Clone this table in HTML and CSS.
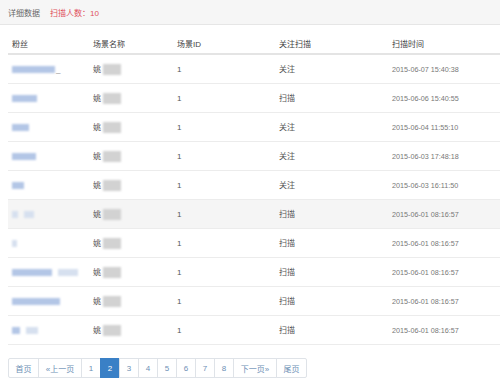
FILE: index.html
```html
<!DOCTYPE html>
<html lang="zh">
<head>
<meta charset="utf-8">
<link rel="stylesheet" href="styles.css">
</head>
<body>
<div class="topbar">
  <span class="title">详细数据</span>
  <span class="count">扫描人数：10</span>
</div>
<table class="data">
  <colgroup>
    <col class="c1"><col class="c2"><col class="c3"><col class="c4"><col class="c5">
  </colgroup>
  <thead>
    <tr><th>粉丝</th><th>场景名称</th><th>场景ID</th><th>关注扫描</th><th>扫描时间</th></tr>
  </thead>
  <tbody>
    <tr><td><span class="fan" style="width:43px"></span><span class="tail">_</span></td><td>姚<span class="mask"></span></td><td class="num">1</td><td>关注</td><td class="date">2015-06-07 15:40:38</td></tr>
    <tr><td><span class="fan" style="width:25px"></span></td><td>姚<span class="mask"></span></td><td class="num">1</td><td>扫描</td><td class="date">2015-06-06 15:40:55</td></tr>
    <tr><td><span class="fan" style="width:17px"></span></td><td>姚<span class="mask"></span></td><td class="num">1</td><td>关注</td><td class="date">2015-06-04 11:55:10</td></tr>
    <tr><td><span class="fan" style="width:24px"></span></td><td>姚<span class="mask"></span></td><td class="num">1</td><td>关注</td><td class="date">2015-06-03 17:48:18</td></tr>
    <tr><td><span class="fan" style="width:12px"></span></td><td>姚<span class="mask"></span></td><td class="num">1</td><td>关注</td><td class="date">2015-06-03 16:11:50</td></tr>
    <tr class="hover"><td><span class="fan faint" style="width:6px"></span><span class="fan faint gap" style="width:10px"></span></td><td>姚<span class="mask"></span></td><td class="num">1</td><td>扫描</td><td class="date">2015-06-01 08:16:57</td></tr>
    <tr><td><span class="fan faint" style="width:5px"></span></td><td>姚<span class="mask"></span></td><td class="num">1</td><td>扫描</td><td class="date">2015-06-01 08:16:57</td></tr>
    <tr><td><span class="fan" style="width:40px"></span><span class="fan faint gap" style="width:20px"></span></td><td>姚<span class="mask"></span></td><td class="num">1</td><td>扫描</td><td class="date">2015-06-01 08:16:57</td></tr>
    <tr><td><span class="fan" style="width:48px"></span></td><td>姚<span class="mask"></span></td><td class="num">1</td><td>扫描</td><td class="date">2015-06-01 08:16:57</td></tr>
    <tr><td><span class="fan" style="width:8px"></span><span class="fan faint gap" style="width:12px"></span></td><td>姚<span class="mask"></span></td><td class="num">1</td><td>扫描</td><td class="date">2015-06-01 08:16:57</td></tr>
  </tbody>
</table>
<nav class="pager">
  <a class="pg wide2">首页</a>
  <a class="pg wide3">«上一页</a>
  <a class="pg">1</a>
  <a class="pg active">2</a>
  <a class="pg">3</a>
  <a class="pg">4</a>
  <a class="pg">5</a>
  <a class="pg">6</a>
  <a class="pg">7</a>
  <a class="pg">8</a>
  <a class="pg wide3">下一页»</a>
  <a class="pg wide2">尾页</a>
</nav>
</body>
</html>
```
FILE: styles.css
```css
* { box-sizing: border-box; }
html, body { margin: 0; padding: 0; background: #fff; }
body {
  width: 500px;
  height: 383px;
  overflow: hidden;
  font-family: "Liberation Sans", "Noto Sans CJK SC", sans-serif;
  font-size: 8px;
  color: #555;
}
.topbar {
  height: 25px;
  background: #f6f6f6;
  border-bottom: 1px solid #e6e6e6;
  display: flex;
  align-items: center;
  padding: 1px 0 0 8px;
  gap: 10px;
}
.title { color: #666; }
.count { color: #e0505a; }

.data {
  margin-left: 8px;
  width: 492px;
  border-collapse: collapse;
  table-layout: fixed;
}
.c1 { width: 81px; }
.c2 { width: 84px; }
.c3 { width: 102px; }
.c4 { width: 113px; }
.c5 { width: 112px; }
.data th {
  text-align: left;
  font-weight: normal;
  color: #444;
  line-height: 12px;
  padding: 14px 4px 2px;
  border-bottom: 2px solid #e4e4e4;
  vertical-align: bottom;
}
.data td {
  line-height: 12px;
  padding: 9px 4px 7px;
  border-bottom: 1px solid #ececec;
  color: #555;
  white-space: nowrap;
  vertical-align: middle;
}
.data tr.hover td { background: #f5f5f5; }
.data td.num { color: #555; }
.data td.date { font-size: 7.2px; color: #777; }

.fan {
  display: inline-block;
  height: 7px;
  vertical-align: middle;
  background: #b3c6e6;
  filter: blur(1px);
}
.fan.faint { background: #d6e0ef; }
.fan.gap { margin-left: 6px; }
.tail { color: #888; margin-left: 1px; }
.mask {
  display: inline-block;
  width: 18px;
  height: 11px;
  margin-left: 2px;
  vertical-align: middle;
  background: #d2d2d2;
  filter: blur(1.2px);
}

.pager {
  display: flex;
  margin: 13px 0 0 8px;
}
.pg {
  display: flex;
  align-items: center;
  justify-content: center;
  width: 20px;
  height: 20px;
  margin-left: -1px;
  border: 1px solid #dfe3e8;
  color: #6d8fb5;
  font-size: 8px;
  background: #fff;
}
.pg:first-child { margin-left: 0; border-radius: 2px 0 0 2px; }
.pg:last-child { border-radius: 0 2px 2px 0; }
.pg.wide2 { width: 31px; }
.pg.wide3 { width: 44px; }
.pg.active {
  background: #3a80c6;
  border-color: #3a80c6;
  color: #fff;
}
```
